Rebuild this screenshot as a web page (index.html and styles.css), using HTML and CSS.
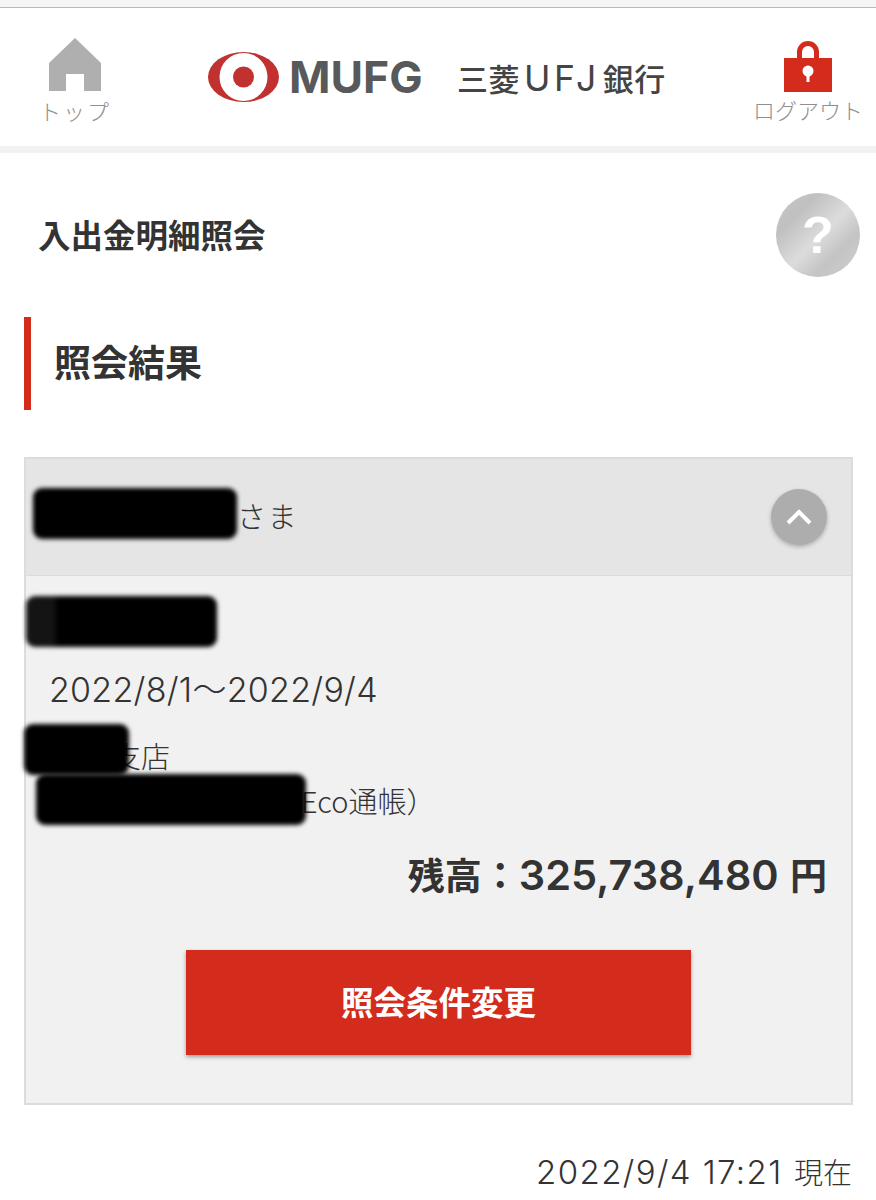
FILE: index.html
```html
<!DOCTYPE html>
<html lang="ja">
<head>
    <meta charset="UTF-8">
    <meta name="viewport" content="width=device-width, initial-scale=1.0">
    <title>入出金明細照会</title>
    <link rel="stylesheet" href="styles.css">
</head>
<body>
    <div class="status-strip"></div>

    <!-- Header -->
    <header class="site-header">
        <a class="nav-item nav-top">
            <svg class="nav-icon" width="52" height="54" viewBox="0 0 52 54">
                <path fill="#aeafae" d="M26 0 L52 25 V53 H35 V36 H17 V53 H0 V25 Z"/>
            </svg>
            <span class="nav-label">トップ</span>
        </a>
        <div class="logo">
            <svg class="logo-mark" width="71" height="50" viewBox="0 0 71 50">
                <ellipse cx="35.5" cy="25" rx="35.5" ry="25" fill="#c1312f"/>
                <ellipse cx="35.5" cy="25" rx="24" ry="24" fill="#fff"/>
                <circle cx="35.5" cy="25" r="10.5" fill="#c1312f"/>
            </svg>
            <span class="logo-mufg">MUFG</span>
            <span class="logo-bank">三菱<span class="logo-ufj">UFJ</span>銀行</span>
        </div>
        <a class="nav-item nav-logout">
            <svg class="nav-icon" width="48" height="51" viewBox="0 0 48 51">
                <path fill="none" stroke="#d32b1c" stroke-width="5" d="M15.5 20 V11 a8.5 8.5 0 0 1 17 0 V20"/>
                <rect x="0" y="17" width="48" height="34" fill="#d32b1c"/>
                <circle cx="24" cy="30" r="5.5" fill="#fff"/>
                <rect x="22.5" y="32" width="3" height="9" fill="#fff"/>
            </svg>
            <span class="nav-label">ログアウト</span>
        </a>
    </header>

    <div class="page-title-row">
        <h1>入出金明細照会</h1>
        <div class="help-btn">?</div>
    </div>

    <h2 class="section-head">照会結果</h2>

    <!-- Result panel -->
    <section class="panel">
        <div class="panel-head">
            <span class="customer">さま</span>
            <div class="toggle-btn">
                <svg width="26" height="16" viewBox="0 0 26 16">
                    <path fill="none" stroke="#fff" stroke-width="4" d="M2 14 L13 3 L24 14"/>
                </svg>
            </div>
        </div>
        <div class="panel-body">
            <p class="period">2022/8/1～2022/9/4</p>
            <p class="branch">支店</p>
            <p class="account">Eco通帳）</p>
            <p class="balance">残高：<b>325,738,480</b> 円</p>
            <button class="change-btn">照会条件変更</button>
        </div>
        <!-- blacked out parts of the screenshot -->
        <div class="mask mask-name"></div>
        <div class="mask mask-type"></div>
        <div class="mask mask-branch"></div>
        <div class="mask mask-account"></div>
    </section>

    <p class="timestamp"><span class="ts-date">2022/9/4 17:21</span> 現在</p>
</body>
</html>
```

FILE: styles.css
```css
body {
    font-family: "Noto Sans CJK JP", "Liberation Sans", sans-serif;
    background-color: #fff;
    color: #333;
    margin: 0;
    padding: 0;
    overflow: hidden;
    height: 1200px;
}

p, h1, h2 {
    margin: 0;
}

.status-strip {
    height: 7px;
    background-color: #f6f6f6;
    border-bottom: 1px solid #b9b9b9;
}

.site-header {
    height: 138px;
    border-bottom: 7px solid #f2f2f2;
    display: flex;
    align-items: flex-start;
    padding: 0 13px 0 41px;
}

.nav-item {
    display: flex;
    flex-direction: column;
    align-items: center;
    padding-top: 30px;
}

.nav-logout {
    padding-top: 33px;
    margin-left: auto;
}

.nav-icon {
    display: block;
}

.nav-label {
    font-size: 22px;
    line-height: 30px;
    font-weight: 300;
    color: #8f8f8f;
    white-space: nowrap;
}

.nav-top .nav-label {
    width: 70px;
    letter-spacing: 2px;
    text-align: center;
    margin-top: 3px;
    margin-left: -2px;
}

.nav-logout .nav-label {
    margin-top: 2px;
}

.logo {
    display: flex;
    align-items: center;
    margin-top: 44px;
    height: 50px;
    margin-left: 99px;
}

.logo-mark {
    margin-right: 10px;
}

.logo-mufg {
    font-family: Inter, "Liberation Sans", sans-serif;
    font-weight: 700;
    font-size: 44.5px;
    color: #58595b;
    width: 133px;
    margin-right: 35px;
}

.logo-bank {
    font-size: 31px;
    font-weight: 500;
    color: #444;
    letter-spacing: 0.5px;
    white-space: nowrap;
}

.logo-ufj {
    font-family: Inter, "Liberation Sans", sans-serif;
    font-size: 35.5px;
    font-weight: 400;
    letter-spacing: 3.5px;
    margin: 0 3px 0 4px;
}

.page-title-row {
    height: 84px;
    margin-top: 40px;
    padding: 0 16px 0 38px;
    display: flex;
    align-items: center;
    justify-content: space-between;
}

.page-title-row h1 {
    font-size: 32.5px;
    font-weight: 700;
    margin-bottom: 4px;
}

.help-btn {
    width: 84px;
    height: 84px;
    border-radius: 50%;
    background: linear-gradient(135deg, #c8c8c8 0%, #c0c0c0 25%, #dcdcdc 52%, #c4c4c4 72%, #cfcfcf 100%);
    color: #fff;
    font-family: "Liberation Sans", sans-serif;
    font-weight: 700;
    font-size: 52px;
    line-height: 84px;
    text-align: center;
}

.section-head {
    margin: 40px 0 47px 24px;
    height: 93px;
    line-height: 89px;
    border-left: 7px solid #d32b1c;
    padding-left: 23px;
    font-size: 37px;
    font-weight: 700;
}

.panel {
    position: relative;
    margin: 0 23px 0 24px;
    border: 2px solid #dcdcdc;
    background-color: #f1f1f1;
}

.panel-head {
    height: 116px;
    background-color: #e5e5e5;
    border-bottom: 1px solid #dcdcdc;
    display: flex;
    align-items: center;
    justify-content: space-between;
    padding: 0 24px 0 211px;
    font-size: 29px;
    font-weight: 300;
}

.customer {
    letter-spacing: 1.5px;
    margin-bottom: 4px;
}

.toggle-btn {
    width: 56px;
    height: 56px;
    border-radius: 50%;
    background-color: #adadad;
    box-shadow: 0 2px 4px rgba(0, 0, 0, 0.25);
    display: flex;
    align-items: center;
    justify-content: center;
}

.panel-body {
    height: 527px;
    font-weight: 300;
    font-size: 29px;
    box-sizing: border-box;
    padding-top: 92px;
}

.period {
    font-family: Inter, "Noto Sans CJK JP", sans-serif;
    font-size: 34px;
    letter-spacing: 0.25px;
    line-height: 44px;
    margin-left: 23px;
}

.branch {
    line-height: 42px;
    margin: 22px 0 0 86px;
}

.account {
    line-height: 42px;
    margin: 3px 0 0 275px;
}

.balance {
    margin: 26px 24px 0 0;
    text-align: right;
    font-size: 37px;
    font-weight: 700;
    line-height: 54px;
}

.balance b {
    font-family: Inter, "Liberation Sans", sans-serif;
    font-size: 41.5px;
    font-weight: 600;
    margin-right: 3px;
}

.change-btn {
    display: block;
    width: 505px;
    height: 105px;
    margin: 48px auto 0 160px;
    padding: 0 0 5px;
    border: none;
    background-color: #d32b1c;
    color: #fff;
    font-family: inherit;
    font-size: 32.5px;
    font-weight: 700;
    box-shadow: 0 2px 4px rgba(0, 0, 0, 0.35);
}

.mask {
    position: absolute;
    background-color: #000;
    border-radius: 9px;
    filter: blur(2px);
}

.mask-name {
    left: 7px;
    top: 29px;
    width: 204px;
    height: 51px;
}

.mask-type {
    left: 0;
    top: 137px;
    width: 191px;
    height: 51px;
    background: linear-gradient(to right, #141414 14%, #000 17%);
}

.mask-branch {
    left: -2px;
    top: 265px;
    width: 105px;
    height: 51px;
}

.mask-account {
    left: 10px;
    top: 315px;
    width: 270px;
    height: 51px;
}

.timestamp {
    margin: 44px 24px 0 0;
    text-align: right;
    font-size: 29px;
    font-weight: 300;
    line-height: 44px;
}

.ts-date {
    font-family: Inter, "Noto Sans CJK JP", sans-serif;
    font-size: 33px;
    letter-spacing: 1.4px;
    margin-right: 5px;
}
```
